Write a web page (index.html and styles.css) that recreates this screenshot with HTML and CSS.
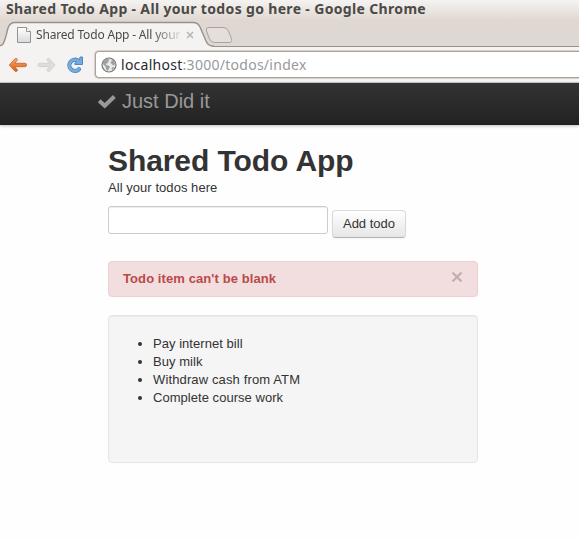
FILE: index.html
```html
<!DOCTYPE html>
<html lang="en">
<head>
<meta charset="utf-8">
<title>Shared Todo App - All your todos go here</title>
<link rel="stylesheet" href="styles.css">
</head>
<body>
<header class="browser">
  <div class="titlebar"><span class="window-title">Shared Todo App - All your todos go here - Google Chrome</span></div>
  <div class="tabstrip">
    <svg class="tab-shape" width="240" height="26" viewBox="0 0 240 26">
      <path d="M-2 25C4 25 4 21 6 15L8 7Q10 1.500 15 1.500H193Q198 1.500 200 6L206 20Q208 25 213 25V27H-2Z" fill="#f4f3f2" stroke="#99928b" stroke-width="1.4"/>
      <path d="M208.500 6.500H223.500Q227 6.500 228.500 10L231.500 18Q232.500 21.500 229 21.500H214.500Q211 21.500 209.500 18L206.500 10Q205.500 6.500 208.500 6.500Z" fill="#e5deda" stroke="#aaa29d"/>
    </svg>
    <div class="tab">
      <svg class="page-icon" width="15" height="17" viewBox="0 0 15 17">
        <defs><linearGradient id="paper" x2="0" y2="1"><stop stop-color="#fff"/><stop offset="1" stop-color="#d9d9d9"/></linearGradient></defs>
        <path d="M.5.5H9.500L13.500 4.500V15.500H.5Z" fill="url(#paper)" stroke="#929292"/><path d="M9.500.5V4.500H13.500" fill="#fff" stroke="#929292"/>
      </svg>
      <span class="tab-title">Shared Todo App - All your</span>
      <svg class="tab-close" width="8" height="8" viewBox="0 0 8 8"><path d="M1 1L7 7M7 1L1 7" stroke="#b8b5b3" stroke-width="1.5"/></svg>
    </div>
  </div>
  <div class="toolbar">
    <svg class="nav-icon" width="20" height="16" viewBox="0 0 20 16">
      <defs><linearGradient id="orange" x2="0" y2="1"><stop stop-color="#f5ac65"/><stop offset="1" stop-color="#d95c1b"/></linearGradient></defs>
      <path d="M1.300 8L7 1.700Q9 .8 9.700 2.500L6.900 6.300H17Q18.500 6.300 18.500 8T17 9.700H6.900L9.700 13.200Q9 15 7 14.300Z" fill="url(#orange)" stroke="#cf6930" stroke-width=".9" stroke-linejoin="round"/>
    </svg>
    <svg class="nav-icon" width="20" height="16" viewBox="0 0 20 16">
      <path d="M18.200 8L12.500 1.700Q10.500 .8 9.800 2.500L12.600 6.300H2.500Q1 6.300 1 8T2.500 9.700H12.600L9.800 13.200Q10.500 15 12.500 14.300Z" fill="#dfdddb" stroke="#d0cecb" stroke-width=".9" stroke-linejoin="round"/>
    </svg>
    <svg class="reload" width="18" height="18" viewBox="0 0 18 18">
      <path d="M11.500 4.300A5.600 5.600 0 1 0 13 13.200" fill="none" stroke="#5286bd" stroke-width="4.200" stroke-linecap="round"/>
      <path d="M16.500 1V8.500H8.800V7.200L11 5.500 13.500 3.500 14 1Z" fill="#75aadd" stroke="#5286bd"/>
      <path d="M11.500 4.300A5.600 5.600 0 1 0 13 13.200" fill="none" stroke="#78ade0" stroke-width="2.600" stroke-linecap="round"/>
    </svg>
    <div class="omnibox">
      <svg width="16" height="16" viewBox="0 0 16 16">
        <circle cx="8" cy="8" r="7" fill="#e9e9e9" stroke="#777" stroke-width="1.2"/>
        <path d="M2 5L4 2.500 7.500 1.800 8.700 3 7 4 7.500 5.400 5.500 6.300 5 8 7.500 8.500 9 10 7.500 12.500 6.500 14 5 12 4.500 9.500 2 7ZM10 2L13 4 14.200 7 12.500 8.600 10.500 7 9.500 5 11 4ZM11.500 10L13.500 10 11.500 13 10.500 12Z" fill="#a0a0a0"/>
      </svg>
      <span class="url"><span class="host">localhost</span>:3000/todos/index</span>
    </div>
  </div>
</header>
<nav class="navbar">
  <a class="brand"><svg width="20" height="15" viewBox="0 0 20 15"><path d="M2.200 6.800L7.700 11.700 17.400 2.500" fill="none" stroke="#999" stroke-width="4"/></svg><span>Just Did it</span></a>
</nav>
<main class="container">
  <h1>Shared Todo App</h1>
  <p class="lead">All your todos here</p>
  <form class="todo-form"><input type="text" aria-label="Todo"><button type="button">Add todo</button></form>
  <div class="alert"><strong>Todo item can't be blank</strong><svg width="12" height="12" viewBox="0 0 12 12"><path d="M1.500 1.500L10.500 10.500M10.500 1.500L1.500 10.500" stroke="#c2b1b2" stroke-width="2.400"/></svg></div>
  <section class="well"><ul><li>Pay internet bill</li><li>Buy milk</li><li class="wide">Withdraw cash from ATM</li><li>Complete course work</li></ul></section>
</main>
</body>
</html>
```

FILE: styles.css
```css
* { box-sizing: border-box; }
body { margin: 0; height: 539px; overflow: hidden; background: #fefefe; color: #333; font: 13px/18px "Liberation Sans", Arial, sans-serif; }
svg { display: block; flex: none; }
.browser { height: 83px; background: linear-gradient(#f5f3f1, #dfd7d1 21px); font-family: "Noto Sans", sans-serif; color: #4b4a46; }
.titlebar { height: 21px; padding-left: 6px; line-height: 18px; white-space: nowrap; font-size: 14px; font-weight: 700; letter-spacing: .34px; }
.window-title { display: inline-block; }
.tabstrip { height: 26px; position: relative; border-bottom: 1px solid #99928b; }
.tab-shape { position: absolute; left: 0; top: 0; }
.tab { position: relative; height: 26px; padding-left: 17px; display: flex; align-items: center; }
.page-icon { margin-top: 2px; }
.tab-title { width: 144px; margin: 2px 0 0 4px; white-space: nowrap; font-size: 12px; line-height: 18px; letter-spacing: -.18px; -webkit-mask-image: linear-gradient(90deg, #000 116px, transparent 148px); mask-image: linear-gradient(90deg, #000 116px, transparent 148px); }
.tab-close { margin: 2px 0 0 6px; }
.toolbar { height: 36px; padding: 4px 0 4px 8px; display: flex; align-items: center; background: #f4f3f2; border-bottom: 1px solid #ccc9c6; }
.nav-icon { margin-right: 9px; }
.reload { margin-right: 11px; }
.omnibox { flex: 1; height: 27px; border: 1px solid #aaa39d; border-right: 0; box-shadow: 0 0 0 1px #d7d1cc; border-radius: 4px 0 0 4px; background: #fff; display: flex; align-items: center; gap: 4px; padding-left: 5px; }
.url { font-size: 14px; line-height: 24px; color: #999; white-space: nowrap; letter-spacing: .27px; }
.host { color: #292929; }
.navbar { height: 42px; padding: 8px 0 0 97px; background: linear-gradient(#333, #222); box-shadow: 0 1px 3px rgba(0,0,0,.25), inset 0 -1px 0 rgba(0,0,0,.1); }
.brand { display: flex; align-items: center; gap: 5px; height: 20px; color: #999; font-size: 20px; line-height: 20px; }
.container { width: 370px; margin-left: 108px; padding-top: 18px; }
h1 { margin: 0; font-size: 30px; line-height: 36px; letter-spacing: -.08px; }
.lead { margin: 0 0 9px; letter-spacing: .05px; }
.todo-form { display: flex; align-items: flex-start; height: 55px; }
input { width: 220px; height: 28px; margin: 0 4px 0 0; border: 1px solid #ccc; border-radius: 3px; background: #fff; box-shadow: inset 0 1px 1px rgba(0,0,0,.075); }
button { width: 74px; height: 28px; margin: 4px 0 0; padding: 0; color: #333; font: 13px/18px "Liberation Sans", Arial, sans-serif; border: 1px solid #ccc; border-color: #d9d9d9 #d9d9d9 #b3b3b3; border-radius: 4px; background: linear-gradient(#fff, #e6e6e6); box-shadow: 0 1px 2px rgba(0,0,0,.05); }
.alert { height: 36px; margin-bottom: 18px; padding: 8px 14px; border: 1px solid #ebcfd2; border-radius: 4px; background: #f2dede; color: #b94a48; display: flex; justify-content: space-between; letter-spacing: .09px; }
.alert svg { margin-top: 1px; }
.well { height: 148px; padding: 19px; border: 1px solid #e5e5e5; border-radius: 4px; background: #f5f5f5; box-shadow: inset 0 1px 1px rgba(0,0,0,.05); }
ul { margin: 0 0 0 25px; padding: 0; letter-spacing: .04px; }
.wide { letter-spacing: .13px; }
```
